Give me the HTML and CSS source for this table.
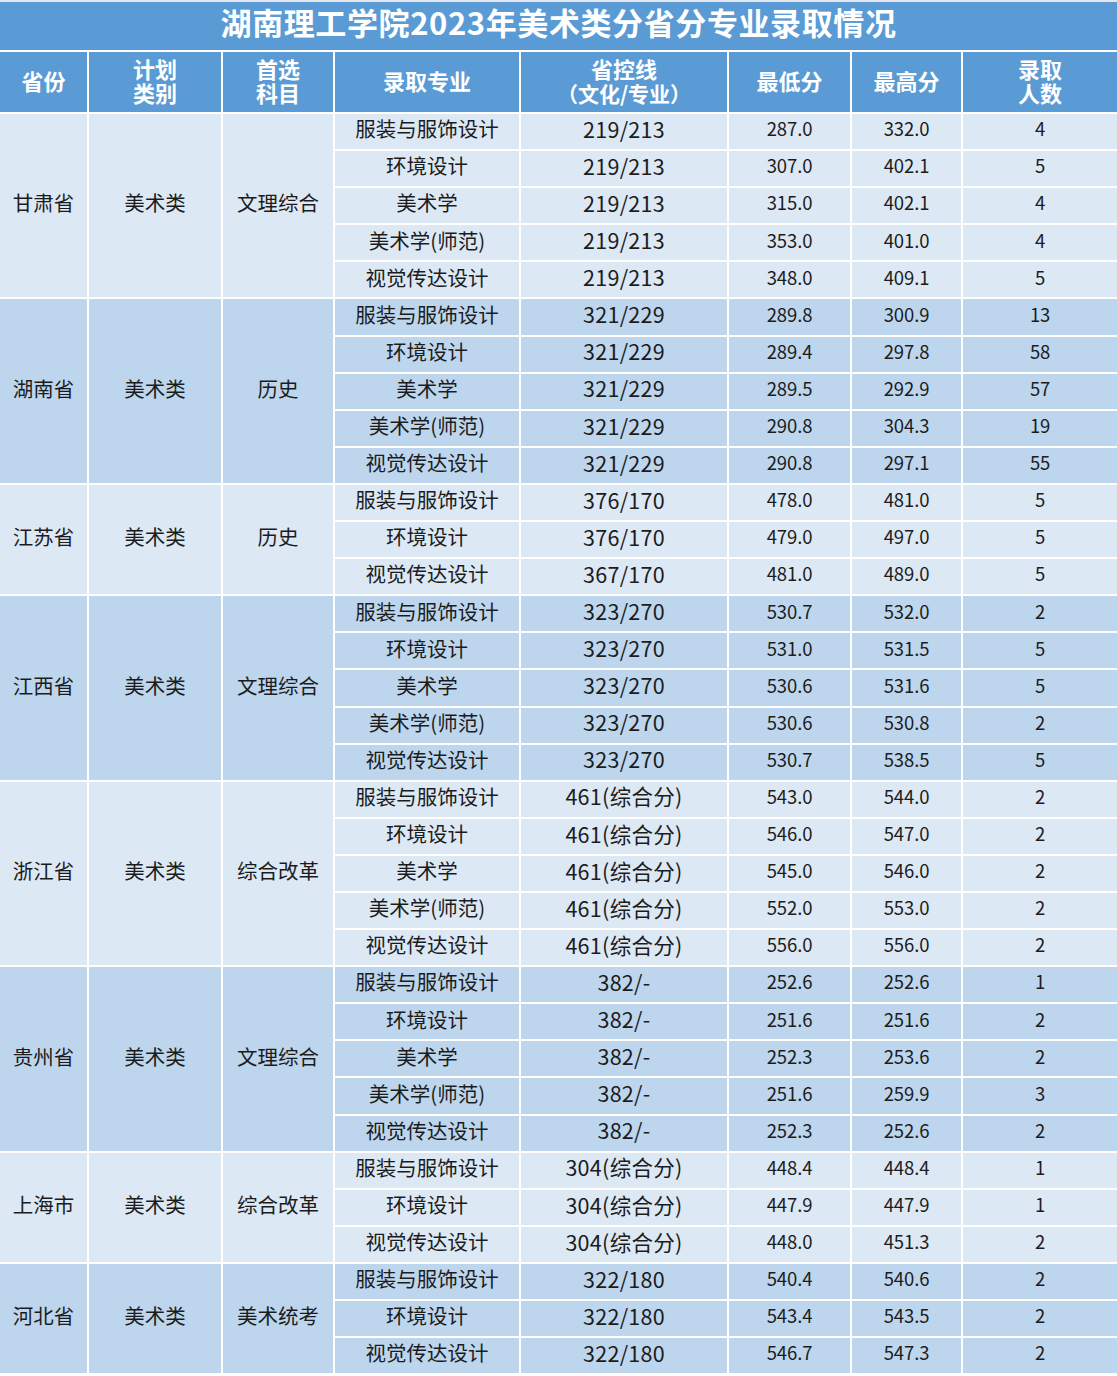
FILE: index.html
```html
<!DOCTYPE html>
<html lang="zh-CN">
<head>
<meta charset="utf-8">
<title>湖南理工学院2023年美术类分省分专业录取情况</title>
<link rel="stylesheet" href="styles.css">
</head>
<body>
<table class="sheet">
<colgroup>
<col class="c1"><col class="c2"><col class="c3"><col class="c4"><col class="c5"><col class="c6"><col class="c7"><col class="c8">
</colgroup>
<thead>
<tr class="title-row"><th colspan="8" class="title">湖南理工学院2023年美术类分省分专业录取情况</th></tr>
<tr class="head-row">
<th>省份</th>
<th><span class="two">计划<br>类别</span></th>
<th><span class="two">首选<br>科目</span></th>
<th>录取专业</th>
<th><span class="two">省控线<br><span class="paren">（文化/专业）</span></span></th>
<th>最低分</th>
<th>最高分</th>
<th><span class="two">录取<br>人数</span></th>
</tr>
</thead>
<tbody class="g-light">
<tr><td rowspan="5">甘肃省</td><td rowspan="5">美术类</td><td rowspan="5">文理综合</td><td>服装与服饰设计</td><td class="ln">219/213</td><td class="n">287.0</td><td class="n">332.0</td><td class="n">4</td></tr>
<tr><td>环境设计</td><td class="ln">219/213</td><td class="n">307.0</td><td class="n">402.1</td><td class="n">5</td></tr>
<tr><td>美术学</td><td class="ln">219/213</td><td class="n">315.0</td><td class="n">402.1</td><td class="n">4</td></tr>
<tr><td>美术学(师范)</td><td class="ln">219/213</td><td class="n">353.0</td><td class="n">401.0</td><td class="n">4</td></tr>
<tr><td>视觉传达设计</td><td class="ln">219/213</td><td class="n">348.0</td><td class="n">409.1</td><td class="n">5</td></tr>
</tbody>
<tbody class="g-dark">
<tr><td rowspan="5">湖南省</td><td rowspan="5">美术类</td><td rowspan="5">历史</td><td>服装与服饰设计</td><td class="ln">321/229</td><td class="n">289.8</td><td class="n">300.9</td><td class="n">13</td></tr>
<tr><td>环境设计</td><td class="ln">321/229</td><td class="n">289.4</td><td class="n">297.8</td><td class="n">58</td></tr>
<tr><td>美术学</td><td class="ln">321/229</td><td class="n">289.5</td><td class="n">292.9</td><td class="n">57</td></tr>
<tr><td>美术学(师范)</td><td class="ln">321/229</td><td class="n">290.8</td><td class="n">304.3</td><td class="n">19</td></tr>
<tr><td>视觉传达设计</td><td class="ln">321/229</td><td class="n">290.8</td><td class="n">297.1</td><td class="n">55</td></tr>
</tbody>
<tbody class="g-light">
<tr><td rowspan="3">江苏省</td><td rowspan="3">美术类</td><td rowspan="3">历史</td><td>服装与服饰设计</td><td class="ln">376/170</td><td class="n">478.0</td><td class="n">481.0</td><td class="n">5</td></tr>
<tr><td>环境设计</td><td class="ln">376/170</td><td class="n">479.0</td><td class="n">497.0</td><td class="n">5</td></tr>
<tr><td>视觉传达设计</td><td class="ln">367/170</td><td class="n">481.0</td><td class="n">489.0</td><td class="n">5</td></tr>
</tbody>
<tbody class="g-dark">
<tr><td rowspan="5">江西省</td><td rowspan="5">美术类</td><td rowspan="5">文理综合</td><td>服装与服饰设计</td><td class="ln">323/270</td><td class="n">530.7</td><td class="n">532.0</td><td class="n">2</td></tr>
<tr><td>环境设计</td><td class="ln">323/270</td><td class="n">531.0</td><td class="n">531.5</td><td class="n">5</td></tr>
<tr><td>美术学</td><td class="ln">323/270</td><td class="n">530.6</td><td class="n">531.6</td><td class="n">5</td></tr>
<tr><td>美术学(师范)</td><td class="ln">323/270</td><td class="n">530.6</td><td class="n">530.8</td><td class="n">2</td></tr>
<tr><td>视觉传达设计</td><td class="ln">323/270</td><td class="n">530.7</td><td class="n">538.5</td><td class="n">5</td></tr>
</tbody>
<tbody class="g-light">
<tr><td rowspan="5">浙江省</td><td rowspan="5">美术类</td><td rowspan="5">综合改革</td><td>服装与服饰设计</td><td class="ln">461(综合分)</td><td class="n">543.0</td><td class="n">544.0</td><td class="n">2</td></tr>
<tr><td>环境设计</td><td class="ln">461(综合分)</td><td class="n">546.0</td><td class="n">547.0</td><td class="n">2</td></tr>
<tr><td>美术学</td><td class="ln">461(综合分)</td><td class="n">545.0</td><td class="n">546.0</td><td class="n">2</td></tr>
<tr><td>美术学(师范)</td><td class="ln">461(综合分)</td><td class="n">552.0</td><td class="n">553.0</td><td class="n">2</td></tr>
<tr><td>视觉传达设计</td><td class="ln">461(综合分)</td><td class="n">556.0</td><td class="n">556.0</td><td class="n">2</td></tr>
</tbody>
<tbody class="g-dark">
<tr><td rowspan="5">贵州省</td><td rowspan="5">美术类</td><td rowspan="5">文理综合</td><td>服装与服饰设计</td><td class="ln">382/-</td><td class="n">252.6</td><td class="n">252.6</td><td class="n">1</td></tr>
<tr><td>环境设计</td><td class="ln">382/-</td><td class="n">251.6</td><td class="n">251.6</td><td class="n">2</td></tr>
<tr><td>美术学</td><td class="ln">382/-</td><td class="n">252.3</td><td class="n">253.6</td><td class="n">2</td></tr>
<tr><td>美术学(师范)</td><td class="ln">382/-</td><td class="n">251.6</td><td class="n">259.9</td><td class="n">3</td></tr>
<tr><td>视觉传达设计</td><td class="ln">382/-</td><td class="n">252.3</td><td class="n">252.6</td><td class="n">2</td></tr>
</tbody>
<tbody class="g-light">
<tr><td rowspan="3">上海市</td><td rowspan="3">美术类</td><td rowspan="3">综合改革</td><td>服装与服饰设计</td><td class="ln">304(综合分)</td><td class="n">448.4</td><td class="n">448.4</td><td class="n">1</td></tr>
<tr><td>环境设计</td><td class="ln">304(综合分)</td><td class="n">447.9</td><td class="n">447.9</td><td class="n">1</td></tr>
<tr><td>视觉传达设计</td><td class="ln">304(综合分)</td><td class="n">448.0</td><td class="n">451.3</td><td class="n">2</td></tr>
</tbody>
<tbody class="g-dark">
<tr><td rowspan="3">河北省</td><td rowspan="3">美术类</td><td rowspan="3">美术统考</td><td>服装与服饰设计</td><td class="ln">322/180</td><td class="n">540.4</td><td class="n">540.6</td><td class="n">2</td></tr>
<tr><td>环境设计</td><td class="ln">322/180</td><td class="n">543.4</td><td class="n">543.5</td><td class="n">2</td></tr>
<tr><td>视觉传达设计</td><td class="ln">322/180</td><td class="n">546.7</td><td class="n">547.3</td><td class="n">2</td></tr>
</tbody>
</table>
</body>
</html>
```
FILE: styles.css
```css
html, body {
  margin: 0;
  padding: 0;
  background: #ffffff;
}
body {
  font-family: "Noto Sans CJK SC", "Noto Sans", sans-serif;
  color: #1c1c1c;
}
.sheet {
  width: 1117px;
  table-layout: fixed;
  border-collapse: collapse;
  border-top: 2px solid #e4e8ee;
}
.c1 { width: 88px; }
.c2 { width: 134px; }
.c3 { width: 112px; }
.c4 { width: 186px; }
.c5 { width: 208px; }
.c6 { width: 123px; }
.c7 { width: 111px; }
.c8 { width: 155px; }

.sheet th,
.sheet td {
  border: 2px solid #ffffff;
  padding: 0;
  text-align: center;
  vertical-align: middle;
  white-space: nowrap;
}
.sheet tr:first-child th { border-top: 0; }
.sheet th:first-child, .sheet td:first-child { border-left: 0; }
.sheet th:last-child, .sheet td:last-child { border-right: 0; }

.title-row { height: 50px; }
.sheet th.title {
  background: #5b9bd5;
  color: #ffffff;
  font-size: 31px;
  font-weight: 700;
  letter-spacing: 0.6px;
  line-height: 36px;
  padding-bottom: 8px;
}
.head-row { height: 62px; }
.sheet .head-row th {
  background: #5b9bd5;
  color: #ffffff;
  font-size: 22px;
  font-weight: 700;
  line-height: 1;
  padding-bottom: 4px;
}
.two {
  display: inline-block;
  line-height: 24px;
}
.paren {
  font-size: 21px;
  letter-spacing: 0;
}

tbody tr { height: 37.1px; }
.sheet tbody td {
  font-size: 20.5px;
  line-height: 1;
  padding-bottom: 6px;
}
.sheet tbody td.ln {
  font-size: 21.5px;
  letter-spacing: 0.3px;
}
.sheet tbody td.n {
  font-size: 18.5px;
  letter-spacing: -0.1px;
}
.g-light td { background: #dde8f5; }
.g-dark td { background: #bdd6ee; }
```
